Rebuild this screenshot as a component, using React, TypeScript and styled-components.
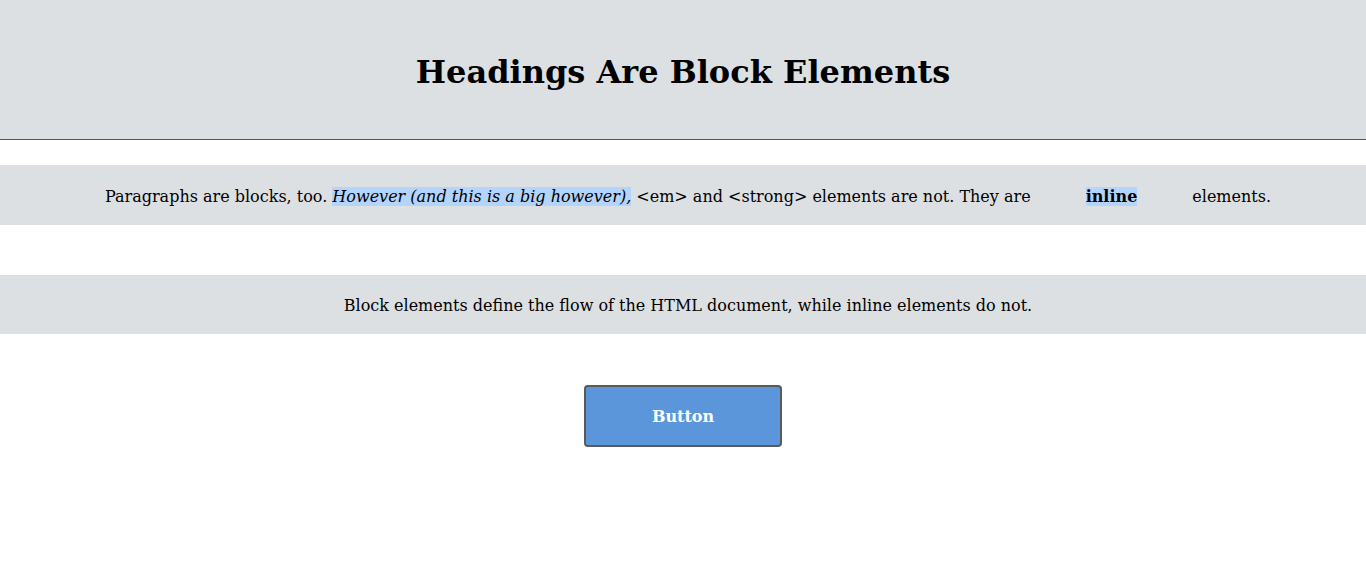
import React from "react";
import styled, { createGlobalStyle } from "styled-components";

const Global = createGlobalStyle`
  html, body { margin: 0; padding: 0; background: #ffffff; }
  body { font-family: "DejaVu Serif", serif; color: #000; }
`;

const Page = styled.div`
  display: flex;
  flex-direction: column;
`;

const Header = styled.header`
  background: #dde0e3;
  height: 140px;
  box-sizing: border-box;
  padding-top: 4px;
  border-bottom: 1px solid #555;
  display: flex;
  align-items: center;
  justify-content: center;
`;

const Title = styled.h1`
  margin: 0;
  font-size: 32px;
  font-weight: bold;
  font-family: "DejaVu Serif", serif;
`;

const Para = styled.p<{ $h: number }>`
  margin: 0;
  background: #dde0e3;
  height: ${(p) => p.$h}px;
  box-sizing: border-box;
  padding-top: 2px;
  display: flex;
  align-items: center;
  justify-content: center;
  padding-left: 10px;
  font-size: 16px;
  font-family: "DejaVu Serif", serif;
  white-space: pre;
`;

const Em = styled.em`
  background: #b3d4fc;
`;

const Strong = styled.strong`
  background: #b3d4fc;
  margin: 0 55px;
`;

const Wrap = styled.div`
  display: flex;
  flex-direction: column;
  margin-top: 25px;
  gap: 50px;
`;

const ButtonRow = styled.div`
  display: flex;
  justify-content: center;
  margin-top: 51px;
`;

const Button = styled.button`
  width: 198px;
  height: 62px;
  background: #5b96db;
  border: 2px solid #5a5a5a;
  border-radius: 4px;
  color: #fff;
  font-weight: bold;
  font-size: 16px;
  font-family: "DejaVu Serif", serif;
`;

export default function App() {
  return (
    <Page>
      <Global />
      <Header>
        <Title>Headings Are Block Elements</Title>
      </Header>
      <Wrap>
        <Para $h={60}>
          Paragraphs are blocks, too. <Em>However (and this is a big however),</Em> &lt;em&gt; and &lt;strong&gt; elements are not. They are<Strong>inline</Strong>elements.
        </Para>
        <Para $h={59}>Block elements define the flow of the HTML document, while inline elements do not.</Para>
      </Wrap>
      <ButtonRow>
        <Button>Button</Button>
      </ButtonRow>
    </Page>
  );
}
